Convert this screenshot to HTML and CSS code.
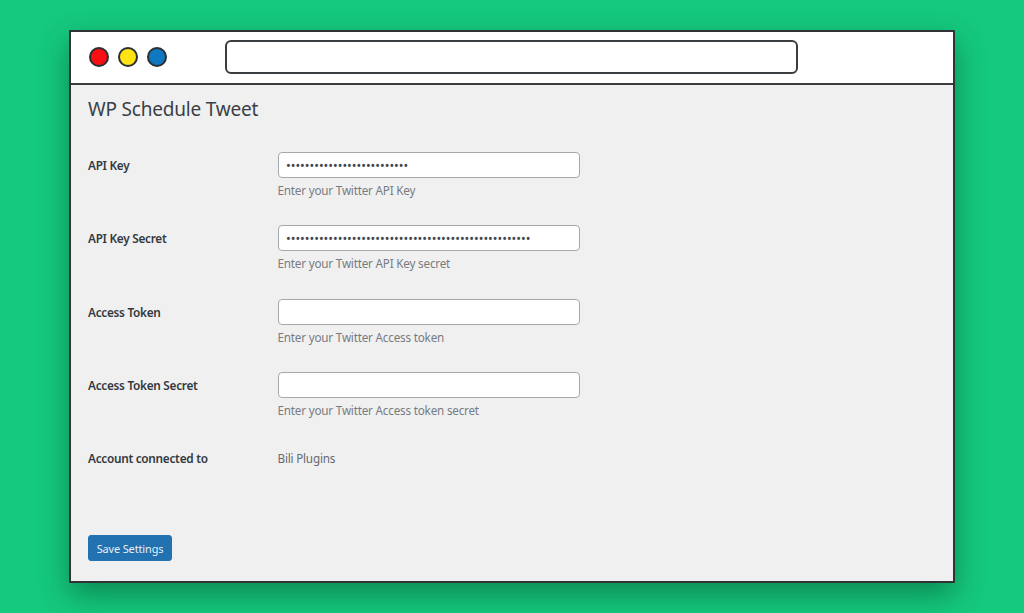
FILE: index.html
```html
<!DOCTYPE html>
<html lang="en">
<head>
<meta charset="utf-8">
<title>WP Schedule Tweet</title>
<link rel="stylesheet" href="styles.css">
</head>
<body>
<div class="window">
  <header class="toolbar">
    <div class="dots">
      <span class="dot dot-red"></span>
      <span class="dot dot-yellow"></span>
      <span class="dot dot-blue"></span>
    </div>
    <div class="address"></div>
  </header>
  <main class="content">
    <h1 class="title">WP Schedule Tweet</h1>
    <form class="form">
      <div class="row">
        <label class="label" for="f1">API Key</label>
        <div class="field">
          <input class="input" id="f1" type="password" value="abcdefghijklmnopqrstuvwxyz">
          <p class="hint">Enter your Twitter API Key</p>
        </div>
      </div>
      <div class="row">
        <label class="label" for="f2">API Key Secret</label>
        <div class="field">
          <input class="input" id="f2" type="password" value="abcdefghijklmnopqrstuvwxyzabcdefghijklmnopqrstuvwxyz">
          <p class="hint">Enter your Twitter API Key secret</p>
        </div>
      </div>
      <div class="row">
        <label class="label" for="f3">Access Token</label>
        <div class="field">
          <input class="input" id="f3" type="text">
          <p class="hint">Enter your Twitter Access token</p>
        </div>
      </div>
      <div class="row">
        <label class="label" for="f4">Access Token Secret</label>
        <div class="field">
          <input class="input" id="f4" type="text">
          <p class="hint">Enter your Twitter Access token secret</p>
        </div>
      </div>
      <div class="row row-account">
        <span class="label">Account connected to</span>
        <span class="account">Bili Plugins</span>
      </div>
      <button class="save" type="button">Save Settings</button>
    </form>
  </main>
</div>
</body>
</html>
```

FILE: styles.css
```css
* { box-sizing: border-box; }
html, body { height: 100%; }
body {
  margin: 0;
  padding: 30px 69px;
  background: #15c97e;
  font-family: "Noto Sans", "Open Sans", sans-serif;
  overflow: hidden;
}
.window {
  width: 886px;
  height: 553px;
  display: flex;
  flex-direction: column;
  border: 2px solid #2f3336;
  border-radius: 1px;
  background: #f0f0f1;
  box-shadow: 0 12px 30px rgba(0, 60, 30, 0.45);
}
.toolbar {
  height: 53px;
  flex: none;
  display: flex;
  align-items: center;
  background: #fff;
  border-bottom: 2px solid #3a3d40;
  padding: 0 0 2px 18px;
}
.dots { display: flex; gap: 9.2px; }
.dot {
  width: 20px;
  height: 20px;
  border-radius: 50%;
  border: 2px solid #2b2f33;
}
.dot-red { background: #f70f14; }
.dot-yellow { background: #ffe313; }
.dot-blue { background: #0f78c0; }
.address {
  width: 573px;
  height: 34px;
  margin-left: 58px;
  border: 2px solid #3a3d40;
  border-radius: 6px;
  background: #fff;
}
.content {
  flex: 1;
  padding: 11px 17px 20px;
  color: #2c3338;
}
.title {
  margin: 0 0 30px;
  font-size: 19px;
  line-height: 26px;
  font-weight: 400;
  letter-spacing: -0.19px;
  color: #3a4045;
}
.form { display: flex; flex-direction: column; }
.row {
  display: grid;
  grid-template-columns: 190px 302px;
  height: 73.33px;
}
.label {
  font-size: 11.8px;
  line-height: 26px;
  font-weight: 600;
  letter-spacing: -0.28px;
  color: #33393e;
}
.field { display: flex; flex-direction: column; }
.input {
  width: 302px;
  height: 26px;
  padding: 0 7px;
  border: 1px solid #a5a8ab;
  border-radius: 4px;
  background: #fff;
  font-family: inherit;
  font-size: 12.5px;
  color: #41474c;
  outline: none;
}
.hint {
  margin: 3px 0 0 -0.5px;
  font-size: 11.7px;
  line-height: 18px;
  letter-spacing: -0.2px;
  color: #777c81;
}
.row-account { height: 90px; }
.account {
  margin-left: -0.5px;
  font-size: 11.7px;
  line-height: 26px;
  letter-spacing: -0.2px;
  color: #646a70;
}
.save {
  align-self: flex-start;
  width: 84px;
  height: 26px;
  padding: 1px 0 0;
  border: 1px solid #2271b1;
  border-radius: 3px;
  background: #2271b1;
  color: #e8f0f6;
  font-family: inherit;
  font-size: 10.9px;
  letter-spacing: -0.1px;
}
```
